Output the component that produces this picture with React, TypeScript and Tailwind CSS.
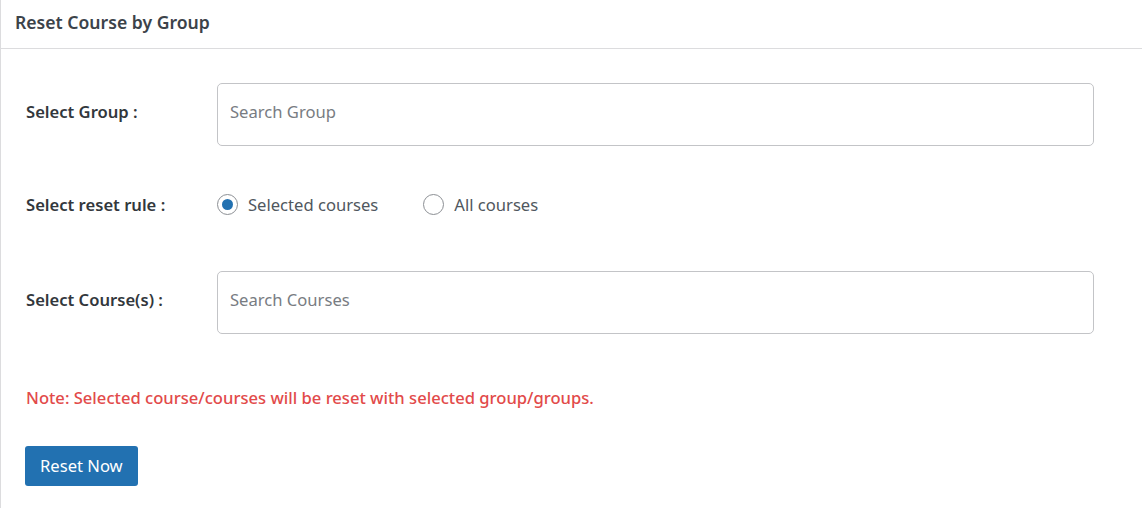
function Row({ label, children }: { label: string; children: React.ReactNode }) {
  return (
    <div className="flex items-center">
      <div className="w-[192px] shrink-0 pl-[1px] pb-[5px] text-[16.6px] font-semibold text-[#32373c]">{label}</div>
      <div className="flex-1">{children}</div>
    </div>
  );
}

function Radio({ checked, label }: { checked?: boolean; label: string }) {
  return (
    <label className="flex items-center gap-[10px] text-[16.6px] text-[#50575e]">
      <span className="w-[21px] h-[21px] rounded-full border border-[#8c8f94] flex items-center justify-center bg-white">
        {checked && <span className="w-[11px] h-[11px] rounded-full bg-[#2271b1]" />}
      </span>
      {label}
    </label>
  );
}

export default function App() {
  return (
    <div
      className="w-[1142px] h-[508px] bg-white border-l border-[#dcdcde] overflow-hidden"
      style={{ fontFamily: '"Noto Sans", "Open Sans", sans-serif' }}
    >
      {/* header */}
      <div className="h-[49px] border-b border-[#dcdcde] flex items-center pl-[14px] pb-[3px]">
        <h2 className="text-[17.6px] font-semibold text-[#3c434a]">Reset Course by Group</h2>
      </div>

      <div className="pl-[24px] pr-[48px]">
        <div className="pt-[34px]">
          <Row label="Select Group :">
            <input
              className="w-full h-[63px] rounded-[5px] border border-[#c3c4c7] px-[12px] pb-[6px] text-[16.6px] text-[#50575e] placeholder:text-[#787c82] outline-none"
              placeholder="Search Group"
            />
          </Row>
        </div>

        <div className="h-[60px] mt-[29px] flex items-center">
          <div className="flex items-center">
            <div className="w-[192px] shrink-0 pl-[1px] text-[16.6px] font-semibold text-[#32373c]">Select reset rule :</div>
            <div className="flex items-center gap-[45px]">
              <Radio checked label="Selected courses" />
              <Radio label="All courses" />
            </div>
          </div>
        </div>

        <div className="mt-[36px]">
          <Row label="Select Course(s) :">
            <input
              className="w-full h-[63px] rounded-[5px] border border-[#c3c4c7] px-[12px] pb-[6px] text-[16.6px] text-[#50575e] placeholder:text-[#787c82] outline-none"
              placeholder="Search Courses"
            />
          </Row>
        </div>

        <p className="mt-[52px] pl-[1px] text-[16.6px] leading-[24px] font-medium text-[#e24a4a]">
          Note: Selected course/courses will be reset with selected group/groups.
        </p>

        <button className="mt-[36px] h-[40px] px-[15px] rounded-[3px] bg-[#2271b1] text-white text-[16.6px]">
          Reset Now
        </button>
      </div>
    </div>
  );
}
